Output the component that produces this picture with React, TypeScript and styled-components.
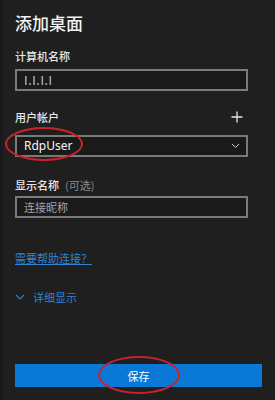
import React from "react";
import styled, { createGlobalStyle } from "styled-components";

const Global = createGlobalStyle`
  html, body { margin: 0; padding: 0; background: #1f1f1f; }
  body { font-family: "Noto Sans", "Noto Sans CJK SC", sans-serif; }
`;

const Page = styled.div`
  position: relative;
  width: 275px;
  height: 400px;
  box-sizing: border-box;
  background: #1f1f1f;
  border-left: 3px solid #191919;
  padding: 11px 13px 0 12px;
  display: flex;
  flex-direction: column;
  overflow: hidden;
`;

const Title = styled.h1`
  margin: 0;
  font-family: "Noto Sans CJK SC", sans-serif;
  font-size: 17px;
  line-height: 24px;
  font-weight: 500;
  color: #f2f2f2;
`;

const Label = styled.div<{ $top: number }>`
  margin-top: ${(p) => p.$top}px;
  font-family: "Noto Sans CJK SC", sans-serif;
  font-size: 11px;
  line-height: 16px;
  font-weight: 500;
  color: #e8e8e8;
`;

const Optional = styled.span`
  color: #8a8a8a;
  font-weight: 400;
  margin-left: 6px;
`;

const LabelRow = styled.div<{ $top: number }>`
  margin-top: ${(p) => p.$top}px;
  width: 233px;
  display: flex;
  align-items: center;
  justify-content: space-between;
  height: 16px;
  font-family: "Noto Sans CJK SC", sans-serif;
  font-size: 11px;
  font-weight: 500;
  color: #e8e8e8;
`;

const Field = styled.div<{ $top: number }>`
  margin-top: ${(p) => p.$top}px;
  width: 233px;
  height: 22px;
  box-sizing: border-box;
  border: 2px solid #7a7a7a;
  background: #1a1a1a;
  display: flex;
  align-items: center;
  justify-content: space-between;
  padding: 0 6px 0 7px;
`;

const FieldText = styled.span<{ $tone: "value" | "placeholder" | "blur" }>`
  font-family: ${(p) =>
    p.$tone === "value" ? `"Noto Sans", sans-serif` : `"Noto Sans CJK SC", sans-serif`};
  font-size: ${(p) => (p.$tone === "value" ? "12px" : "11px")};
  line-height: 16px;
  color: ${(p) =>
    p.$tone === "value" ? "#f5f5f5" : p.$tone === "placeholder" ? "#a8a8a8" : "#9a9a9a"};
  ${(p) => (p.$tone === "blur" ? "filter: blur(0.7px); font-weight: 700; letter-spacing: 0.5px;" : "")}
`;

const Link = styled.a`
  margin-top: 32px;
  font-family: "Noto Sans CJK SC", sans-serif;
  font-size: 11px;
  line-height: 16px;
  color: #2f83d4;
  text-decoration: underline;
  align-self: flex-start;
`;

const Details = styled.div`
  margin-top: 23px;
  display: flex;
  align-items: center;
  gap: 8px;
  font-family: "Noto Sans CJK SC", sans-serif;
  font-size: 11px;
  line-height: 16px;
  color: #2f83d4;
`;

const SaveButton = styled.button`
  margin-top: 59px;
  width: 247px;
  height: 23px;
  border: none;
  background: #0a78d6;
  color: #ffffff;
  font-family: "Noto Sans CJK SC", sans-serif;
  font-size: 11px;
  padding: 0;
`;

const Circle = styled.div<{ $l: number; $t: number; $w: number; $h: number }>`
  position: absolute;
  left: ${(p) => p.$l}px;
  top: ${(p) => p.$t}px;
  width: ${(p) => p.$w}px;
  height: ${(p) => p.$h}px;
  box-sizing: border-box;
  border: 2px solid #c8232c;
  border-radius: 50%;
  pointer-events: none;
`;

const Chevron = ({ color, size = 10 }: { color: string; size?: number }) => (
  <svg width={size} height={size * 0.6} viewBox="0 0 10 6">
    <path d="M1 1 L5 5 L9 1" fill="none" stroke={color} strokeWidth="1.1" />
  </svg>
);

const Plus = () => (
  <svg width="12" height="12" viewBox="0 0 12 12" style={{ marginRight: 5 }}>
    <path d="M6 0.5 V11.5 M0.5 6 H11.5" stroke="#e6e6e6" strokeWidth="1.3" />
  </svg>
);

export default function App() {
  return (
    <>
      <Global />
      <Page>
        <Title>添加桌面</Title>
        <Label $top={13}>计算机名称</Label>
        <Field $top={5}>
          <FieldText $tone="blur">I.I.I.I</FieldText>
        </Field>
        <LabelRow $top={18}>
          <span>用户帐户</span>
          <Plus />
        </LabelRow>
        <Field $top={10}>
          <FieldText $tone="value">RdpUser</FieldText>
          <Chevron color="#cfcfcf" size={9} />
        </Field>
        <Label $top={20}>
          显示名称<Optional>(可选)</Optional>
        </Label>
        <Field $top={3}>
          <FieldText $tone="placeholder">连接昵称</FieldText>
        </Field>
        <Link>需要帮助连接？</Link>
        <Details>
          <Chevron color="#2f83d4" size={10} />
          <span>详细显示</span>
        </Details>
        <SaveButton>保存</SaveButton>
        <Circle $l={2} $t={127} $w={78} $h={34} />
        <Circle $l={95} $t={356} $w={82} $h={38} />
      </Page>
    </>
  );
}
